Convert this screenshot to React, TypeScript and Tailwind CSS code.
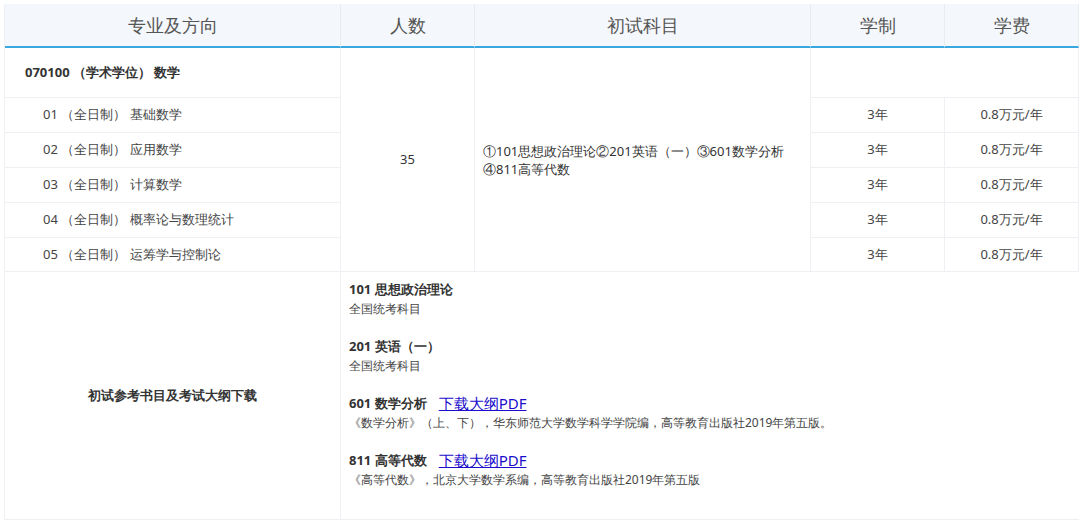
export default function App() {
  const rows = [
    ["01 （全日制） 基础数学", "row-start-3"],
    ["02 （全日制） 应用数学", "row-start-4"],
    ["03 （全日制） 计算数学", "row-start-5"],
    ["04 （全日制） 概率论与数理统计", "row-start-6"],
    ["05 （全日制） 运筹学与控制论", "row-start-7"],
  ];
  const cell = "border-r border-b border-[#eef0f3] flex items-center";
  return (
    <div className="w-[1080px] h-[529px] bg-white text-[#333] overflow-hidden pt-[4px] pl-[4px] font-['Noto_Sans_CJK_SC','Noto_Sans',sans-serif]">
      <div className="grid grid-cols-[336px_134px_336px_134px_134px] grid-rows-[44px_50px_35px_35px_35px_35px_34px_248px] border-l border-[#eef0f3]">
        {["专业及方向", "人数", "初试科目", "学制", "学费"].map((h) => (
          <div key={h} className="bg-[#f4f7fb] border-r border-[#e8ecf1] border-b-2 border-b-[#3aa8e0] flex items-center justify-center text-[18px] text-[#555]">{h}</div>
        ))}
        <div className={`${cell} col-start-1 row-start-2 pl-[20px] text-[13px] font-bold text-[#333]`}>070100 （学术学位） 数学</div>
        <div className={`${cell} col-start-2 row-start-2 row-end-8 justify-center text-[13px]`}>35</div>
        <div className={`${cell} col-start-3 row-start-2 row-end-8 px-[8px] text-[13px] leading-[18px]`}>
          <div>①101思想政治理论②201英语（一）③601数学分析<br />④811高等代数</div>
        </div>
        <div className={`${cell} col-start-4 col-end-6 row-start-2`} />
        {rows.map(([r, rs]) => (
          <div key={r} className="contents">
            <div className={`${cell} col-start-1 ${rs} pl-[38px] text-[13px] text-[#444]`}>{r}</div>
            <div className={`${cell} col-start-4 ${rs} justify-center text-[13px] text-[#444]`}>3年</div>
            <div className={`${cell} col-start-5 ${rs} justify-center text-[13px] text-[#444]`}>0.8万元/年</div>
          </div>
        ))}
        <div className={`${cell} col-start-1 row-start-8 justify-center text-[13px] font-bold`}>初试参考书目及考试大纲下载</div>
        <div className="col-start-2 col-end-6 row-start-8 border-b border-[#eef0f3] pl-[8px] pt-[8px] text-[12px] text-[#444] leading-[19px]">
          <div className="text-[13px] font-bold text-[#333]">101 思想政治理论</div>
          <div>全国统考科目</div>
          <div className="mt-[19px] text-[13px] font-bold text-[#333]">201 英语（一）</div>
          <div>全国统考科目</div>
          <div className="mt-[19px] text-[13px] font-bold text-[#333] flex items-end">601 数学分析<a href="#" className="ml-[12px] text-[15px] leading-[19px] font-normal text-[#1a0dcc] underline">下载大纲PDF</a></div>
          <div>《数学分析》（上、下），华东师范大学数学科学学院编，高等教育出版社2019年第五版。</div>
          <div className="mt-[19px] text-[13px] font-bold text-[#333] flex items-end">811 高等代数<a href="#" className="ml-[12px] text-[15px] leading-[19px] font-normal text-[#1a0dcc] underline">下载大纲PDF</a></div>
          <div>《高等代数》，北京大学数学系编，高等教育出版社2019年第五版</div>
        </div>
      </div>
    </div>
  );
}
